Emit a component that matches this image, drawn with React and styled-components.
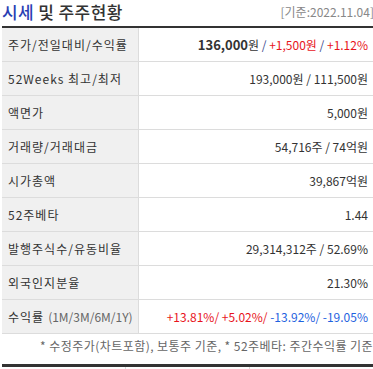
import React from "react";
import styled, { createGlobalStyle } from "styled-components";

const GlobalStyle = createGlobalStyle`
  html, body {
    margin: 0;
    padding: 0;
    background: #fff;
    overflow: hidden;
  }
  body {
    font-family: "Noto Sans CJK KR", "Noto Sans", sans-serif;
    color: #333;
  }
`;

const Wrap = styled.div`
  width: 373px;
  padding-left: 2px;
  box-sizing: border-box;
  overflow: hidden;
`;

const Head = styled.div`
  display: flex;
  align-items: flex-start;
  justify-content: space-between;
  height: 26px;
`;

const Title = styled.h3`
  margin: 0;
  font-size: 17px;
  font-weight: 500;
  color: #333;
  letter-spacing: 0.4px;
  line-height: 24px;

  em {
    font-style: normal;
    color: #2a3fb4;
  }
`;

const Stamp = styled.span`
  font-size: 12px;
  line-height: 24px;
  color: #888;
  margin-right: -1px;
`;

const Table = styled.div`
  border-top: 2px solid #333;
  width: 380px;
`;

const Row = styled.div`
  display: grid;
  grid-template-columns: 137px 1fr;
  height: 33px;
  border-bottom: 1px solid #dcdcdc;
`;

const Label = styled.div`
  display: flex;
  align-items: center;
  padding-left: 6px;
  background: #f0f0f0;
  border-right: 1px solid #dcdcdc;
  font-size: 12px;
  letter-spacing: 1px;
  color: #333;
  white-space: nowrap;

  small {
    font-size: 12px;
    color: #666;
    margin-left: 4px;
    letter-spacing: 0;
  }
`;

const Value = styled.div`
  display: flex;
  align-items: center;
  justify-content: flex-end;
  padding-right: 14px;
  font-size: 12px;
  color: #333;
  white-space: pre;
`;

const Num = styled.span`
  color: ${(p) => (p.$tone === "up" ? "#e8141c" : p.$tone === "down" ? "#1f63e0" : "#333")};
  font-weight: ${(p) => (p.$bold ? 700 : 400)};
  font-size: ${(p) => (p.$bold ? "13px" : "12px")};
`;

const Slash = styled.span`
  color: ${(p) => p.$color || "#3b4a8c"};
`;

const Note = styled.p`
  margin: 0;
  height: 30px;
  padding-top: 3px;
  box-sizing: border-box;
  display: flex;
  align-items: flex-start;
  justify-content: flex-end;
  font-size: 12px;
  color: #666;
  white-space: nowrap;
  letter-spacing: 0.45px;
`;

const NextTable = styled.div`
  border-top: 3px solid #333;
  display: grid;
  grid-template-columns: 123px 124px 1fr;
  height: 10px;

  div + div {
    border-left: 1px solid #dcdcdc;
  }
`;

const rows = [
  {
    label: "52Weeks 최고/최저",
    value: (
      <>
        <Num>193,000원</Num>
        <Slash $color="#333"> / </Slash>
        <Num>111,500원</Num>
      </>
    ),
  },
  { label: "액면가", value: <Num>5,000원</Num> },
  {
    label: "거래량/거래대금",
    value: (
      <>
        <Num>54,716주</Num>
        <Slash $color="#333"> / </Slash>
        <Num>74억원</Num>
      </>
    ),
  },
  { label: "시가총액", value: <Num>39,867억원</Num> },
  { label: "52주베타", value: <Num>1.44</Num> },
  {
    label: "발행주식수/유동비율",
    value: (
      <>
        <Num>29,314,312주</Num>
        <Slash $color="#333"> / </Slash>
        <Num>52.69%</Num>
      </>
    ),
  },
  { label: "외국인지분율", value: <Num>21.30%</Num> },
];

export default function App() {
  return (
    <Wrap>
      <GlobalStyle />
      <Head>
        <Title>
          <em>시세</em> 및 주주현황
        </Title>
        <Stamp>[기준:2022.11.04]</Stamp>
      </Head>
      <Table>
        <Row>
          <Label>주가/전일대비/수익률</Label>
          <Value>
            <Num $bold>136,000</Num>
            <Num>원</Num>
            <Slash> / </Slash>
            <Num $tone="up">+1,500원</Num>
            <Slash> / </Slash>
            <Num $tone="up">+1.12%</Num>
          </Value>
        </Row>
        {rows.map((r) => (
          <Row key={r.label}>
            <Label>{r.label}</Label>
            <Value>{r.value}</Value>
          </Row>
        ))}
        <Row>
          <Label>
            수익률<small>(1M/3M/6M/1Y)</small>
          </Label>
          <Value>
            <Num $tone="up">+13.81%/</Num>
            <Num $tone="up"> +5.02%/</Num>
            <Num $tone="down"> -13.92%/</Num>
            <Num $tone="down"> -19.05%</Num>
          </Value>
        </Row>
      </Table>
      <Note>* 수정주가(차트포함), 보통주 기준, * 52주베타: 주간수익률 기준</Note>
      <NextTable>
        <div />
        <div />
        <div />
      </NextTable>
    </Wrap>
  );
}
